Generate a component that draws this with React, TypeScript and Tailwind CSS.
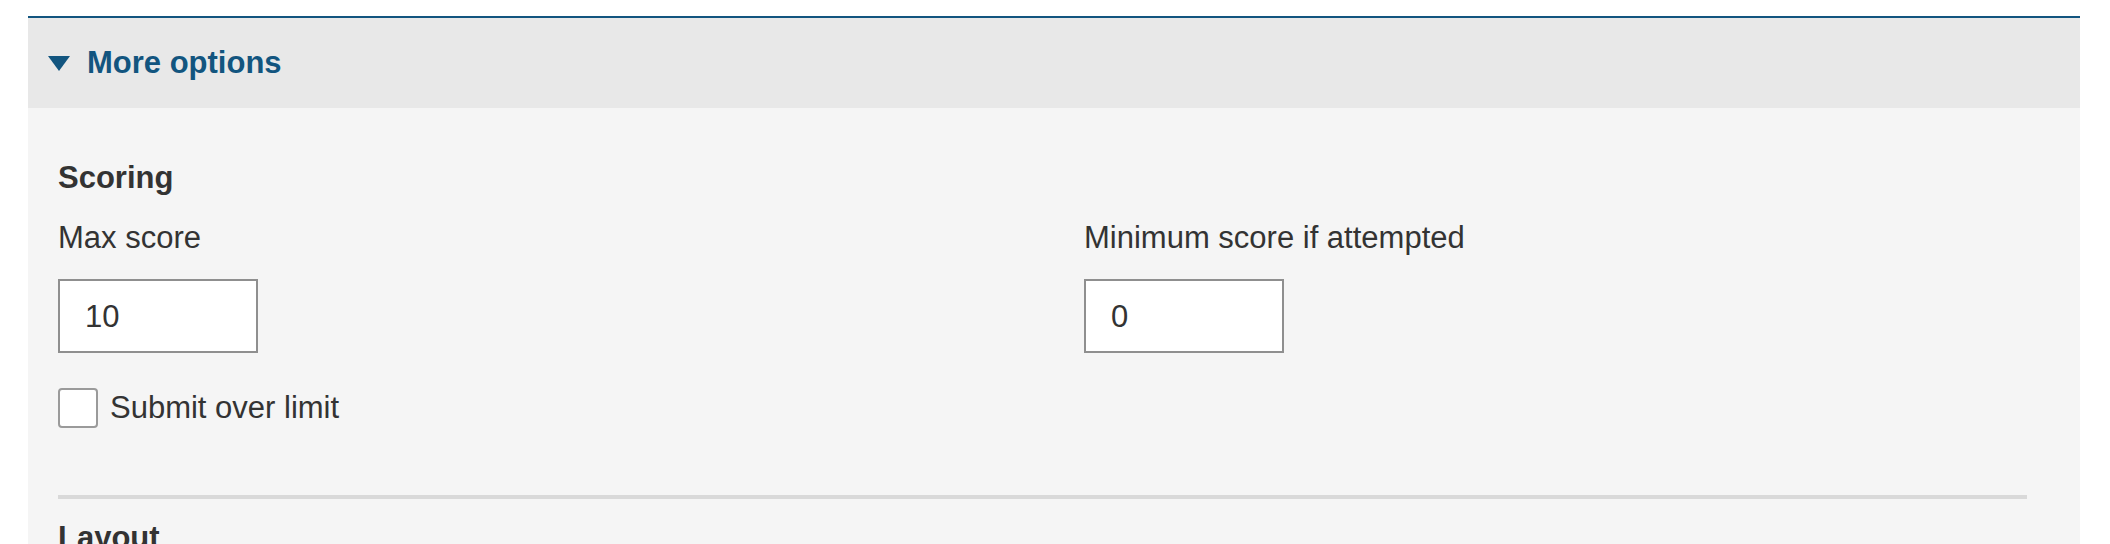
import React from 'react';

const font = { fontFamily: '"Liberation Sans", Arial, sans-serif' };

function Field({ label, value }: { label: string; value: string }) {
    return (
        <div className="flex flex-col">
            <label className="h-[40px] leading-[40px]">{label}</label>
            <div className="mt-[21px] flex h-[74px] w-[200px] items-center border-2 border-[#8f8f8f] bg-white pl-[25px] leading-none">
                {value}
            </div>
        </div>
    );
}

export default function App() {
    return (
        <div className="min-h-screen bg-white pt-4 pl-[28px] pr-[30px] text-[31px] text-[#333333]" style={font}>
            <div className="border-t-2 border-[#12557f]">
                {/* Header */}
                <div className="flex h-[90px] items-center gap-[17px] bg-[#e8e8e8] pl-5">
                    <svg width="22" height="15" viewBox="0 0 22 15" className="shrink-0">
                        <polygon points="0,0 22,0 11,15" fill="#12557f" />
                    </svg>
                    <span className="font-bold leading-[40px] text-[#12557f]">More options</span>
                </div>

                {/* Body */}
                <div className="min-h-[440px] bg-[#f5f5f5] pt-[50px] pl-[30px] pr-[53px]">
                    <h3 className="h-[40px] font-bold leading-[40px]">Scoring</h3>
                    <div className="mt-5 grid grid-cols-[1026px_1fr]">
                        <Field label="Max score" value="10" />
                        <Field label="Minimum score if attempted" value="0" />
                    </div>
                    <label className="mt-[35px] flex items-center gap-3">
                        <span className="block size-[40px] rounded-[4px] border-2 border-[#9a9a9a] bg-white" />
                        <span className="leading-[40px]">Submit over limit</span>
                    </label>
                    <div className="mt-[67px] h-[4px] bg-[#d9d9d9]" />
                    <h3 className="mt-[19px] h-[40px] font-bold leading-[40px]">Layout</h3>
                </div>
            </div>
        </div>
    );
}
